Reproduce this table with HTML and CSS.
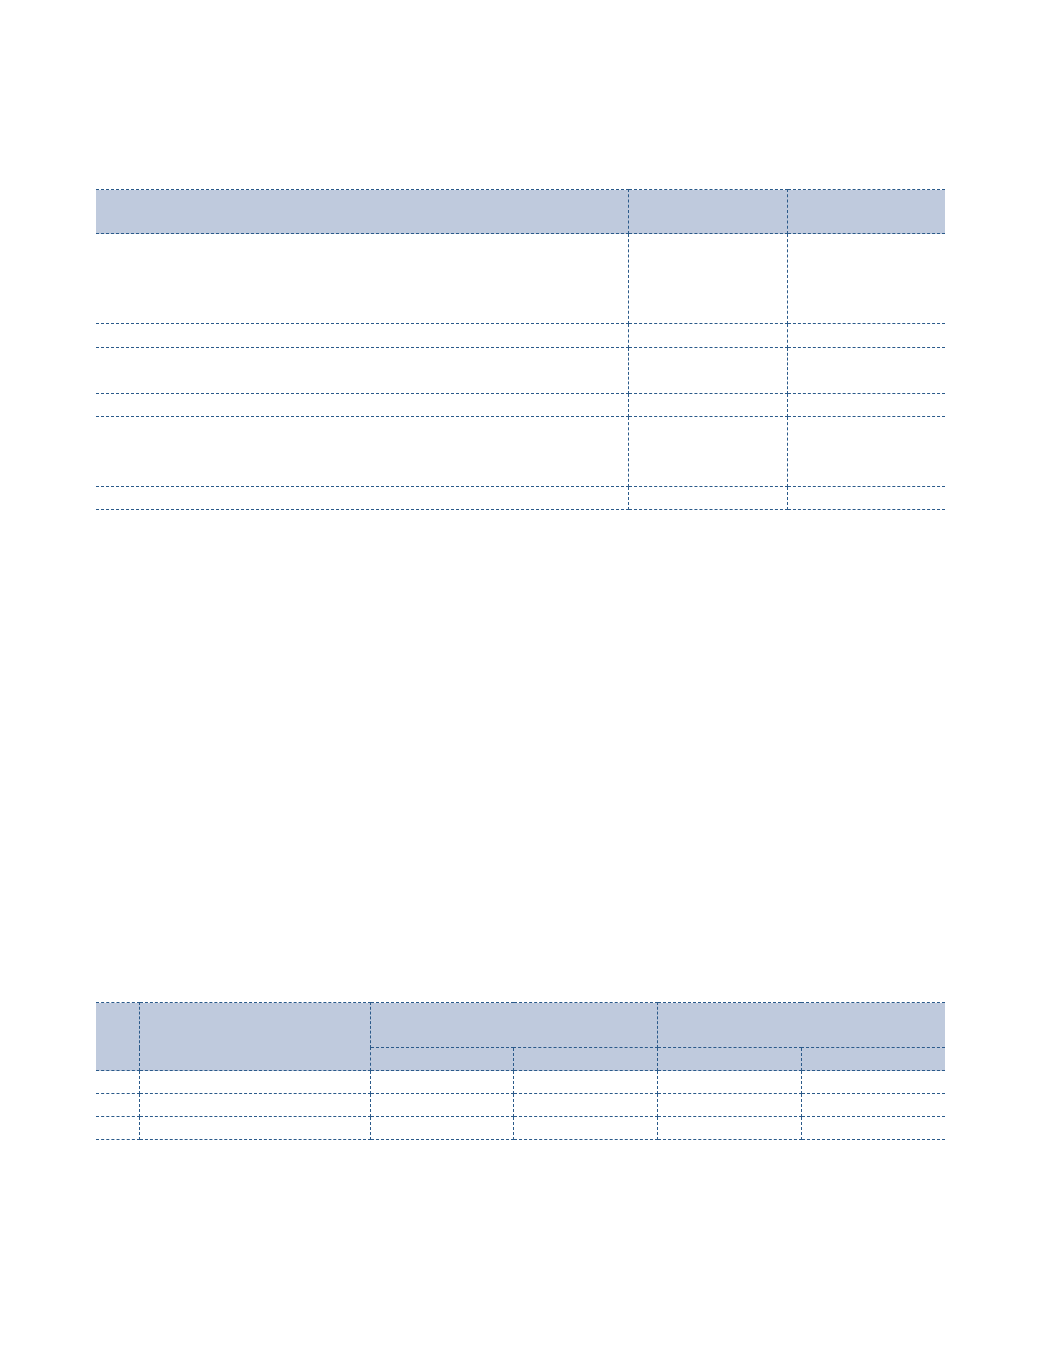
FILE: index.html
```html
<!DOCTYPE html>
<html>
<head>
<meta charset="utf-8">
<link rel="stylesheet" href="styles.css">
</head>
<body>
<div class="page">
  <table class="grid t1">
    <colgroup><col class="c1a"><col class="c1b"><col class="c1c"></colgroup>
    <thead>
      <tr class="h44"><th></th><th></th><th></th></tr>
    </thead>
    <tbody>
      <tr class="h90"><td></td><td></td><td></td></tr>
      <tr class="h24"><td></td><td></td><td></td></tr>
      <tr class="h46"><td></td><td></td><td></td></tr>
      <tr class="h23"><td></td><td></td><td></td></tr>
      <tr class="h70"><td></td><td></td><td></td></tr>
      <tr class="h23"><td></td><td></td><td></td></tr>
    </tbody>
  </table>

  <table class="grid t2">
    <colgroup><col class="c2a"><col class="c2b"><col class="c2c"><col class="c2c"><col class="c2c"><col class="c2c"></colgroup>
    <thead>
      <tr class="h45"><th rowspan="2"></th><th rowspan="2"></th><th colspan="2"></th><th colspan="2"></th></tr>
      <tr class="h23"><th></th><th></th><th></th><th></th></tr>
    </thead>
    <tbody>
      <tr class="h23"><td></td><td></td><td></td><td></td><td></td><td></td></tr>
      <tr class="h23"><td></td><td></td><td></td><td></td><td></td><td></td></tr>
      <tr class="h23"><td></td><td></td><td></td><td></td><td></td><td></td></tr>
    </tbody>
  </table>
</div>
</body>
</html>
```

FILE: styles.css
```css
html, body {
  margin: 0;
  padding: 0;
  background: #ffffff;
  font-family: "Liberation Sans", Arial, sans-serif;
}
.page {
  padding: 189px 0 0 96px;
  width: 849px;
}
.grid {
  border-collapse: collapse;
  table-layout: fixed;
  width: 849px;
}
.grid th, .grid td {
  padding: 0;
  border: 1px dashed #2b5a8a;
}
.grid tr > :first-child { border-left: none; }
.grid tr > :last-child { border-right: none; }
.grid th { background: #bfcadd; }
.t2 thead tr:nth-child(2) > :first-child { border-left: 1px dashed #2b5a8a; }
.t2 {
  margin-top: 492px;
}
.c1a { width: 532px; }
.c1b { width: 159px; }
.c1c { width: 158px; }
.c2a { width: 43px; }
.c2b { width: 231px; }
.c2c { width: 143.75px; }
.h44 > * { height: 43px; }
.h90 > * { height: 89px; }
.h24 > * { height: 23px; }
.h46 > * { height: 45px; }
.h23 > * { height: 22px; }
.h70 > * { height: 69px; }
.h45 > * { height: 44px; }
```
